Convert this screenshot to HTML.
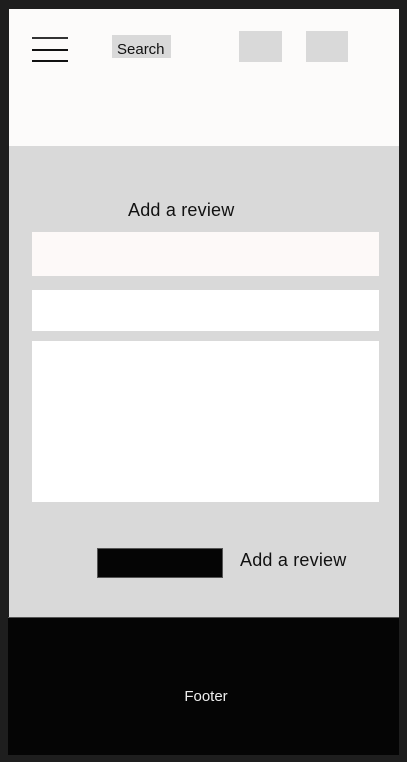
<!DOCTYPE html>
<html><head><style>
*{margin:0;padding:0;box-sizing:border-box}
body{width:407px;height:762px;background:#1e1e1e;position:relative;overflow:hidden;font-family:"Liberation Sans",sans-serif}
div{position:absolute}
</style></head><body>
<div style="left:9px;top:9px;width:390px;height:137px;background:#fcfbfa"></div>
<div style="left:32px;top:37px;width:36px;height:1.5px;background:#333"></div>
<div style="left:32px;top:49px;width:36px;height:1.5px;background:#111"></div>
<div style="left:32px;top:60px;width:36px;height:1.5px;background:#111"></div>
<div style="left:112px;top:35px;width:59px;height:23px;background:#d9d9d9;font-size:15px;color:#111;line-height:29px;padding-left:5px">Search</div>
<div style="left:239px;top:31px;width:43px;height:31px;background:#d9d9d9"></div>
<div style="left:306px;top:31px;width:42px;height:31px;background:#d9d9d9"></div>
<div style="left:9px;top:146px;width:390px;height:471px;background:#d9d9d9"></div>
<div style="left:128px;top:200px;font-size:18px;color:#111;letter-spacing:0.2px">Add a review</div>
<div style="left:32px;top:232px;width:347px;height:44px;background:#fdf9f8"></div>
<div style="left:32px;top:290px;width:347px;height:41px;background:#fff"></div>
<div style="left:32px;top:341px;width:347px;height:161px;background:#fff"></div>
<div style="left:97px;top:548px;width:126px;height:30px;background:#050505;border:1px solid #555"></div>
<div style="left:240px;top:550px;font-size:18px;color:#111;letter-spacing:0.2px">Add a review</div>
<div style="left:8px;top:617px;width:391px;height:138px;background:#050505;border-top:1px solid #555"></div>
<div style="left:0;width:412px;top:688px;text-align:center;font-size:15px;color:#eee">Footer</div>
</body></html>
